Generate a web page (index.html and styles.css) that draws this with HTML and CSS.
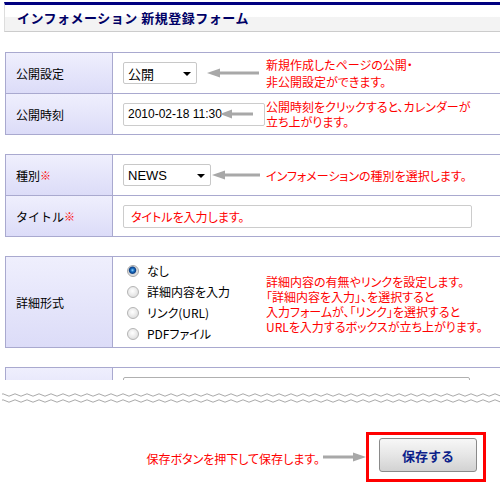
FILE: index.html
```html
<!DOCTYPE html>
<html lang="ja">
<head>
<meta charset="utf-8">
<title>インフォメーション 新規登録フォーム</title>
<link rel="stylesheet" href="styles.css">
</head>
<body>
<div class="page">
  <div class="title">インフォメーション 新規登録フォーム</div>

  <div class="form-clip">
    <div class="tbl">
      <div class="row">
        <div class="label">公開設定</div>
        <div class="value">
          <div class="ctrl">
            <div class="select sel-pub">公開<span class="caret"></span></div>
            <svg class="arrow" width="52" height="10" viewBox="0 0 52 10"><path d="M0 5 L13 0.5 L13 9.5 Z"/><rect x="12" y="3.5" width="40" height="3"/></svg>
          </div>
          <p class="note note-loose">新規作成したページの公開・<br>非公開設定ができます。</p>
        </div>
      </div>
      <div class="row">
        <div class="label">公開時刻</div>
        <div class="value">
          <div class="ctrl">
            <div class="input input-date">2010-02-18 11:30</div>
            <svg class="arrow arrow-over" width="33" height="10" viewBox="0 0 33 10"><path d="M0 5 L12 0.5 L12 9.5 Z"/><rect x="11" y="3.5" width="22" height="3"/></svg>
          </div>
          <p class="note">公開時刻をクリックすると、カレンダーが<br>立ち上がります。</p>
        </div>
      </div>
    </div>

    <div class="tbl">
      <div class="row">
        <div class="label">種別<span class="req">※</span></div>
        <div class="value">
          <div class="ctrl">
            <div class="select sel-news">NEWS<span class="caret"></span></div>
            <svg class="arrow arrow-news" width="48" height="10" viewBox="0 0 48 10"><path d="M0 5 L13 0.5 L13 9.5 Z"/><rect x="12" y="3.5" width="36" height="3"/></svg>
          </div>
          <p class="note">インフォメーションの種別を選択します。</p>
        </div>
      </div>
      <div class="row">
        <div class="label">タイトル<span class="req">※</span></div>
        <div class="value">
          <div class="input input-title">タイトルを入力します。</div>
        </div>
      </div>
    </div>

    <div class="tbl">
      <div class="row row-tall">
        <div class="label">詳細形式</div>
        <div class="value">
          <div class="radios">
            <div class="radio-item"><span class="radio on"></span>なし</div>
            <div class="radio-item"><span class="radio"></span>詳細内容を入力</div>
            <div class="radio-item"><span class="radio"></span>リンク(URL)</div>
            <div class="radio-item"><span class="radio"></span>PDFファイル</div>
          </div>
          <p class="note note-detail">詳細内容の有無やリンクを設定します。<br>「詳細内容を入力」、を選択すると<br>入力フォームが、「リンク」を選択すると<br>URLを入力するボックスが立ち上がります。</p>
        </div>
      </div>
    </div>

    <div class="tbl">
      <div class="row row-cut">
        <div class="label"></div>
        <div class="value value-top">
          <div class="input input-cut"></div>
        </div>
      </div>
    </div>
  </div>

  <svg class="waves" width="500" height="14" viewBox="0 0 500 14">
    <defs>
      <pattern id="wave" x="0" y="0" width="12" height="14" patternUnits="userSpaceOnUse">
        <path d="M0 5 Q3 2.6 6 5 T12 5" fill="none" stroke="#a8a8a8" stroke-width="1"/>
        <path d="M0 11 Q3 8.6 6 11 T12 11" fill="none" stroke="#a8a8a8" stroke-width="1"/>
      </pattern>
    </defs>
    <rect x="2" y="0" width="498" height="14" fill="url(#wave)"/>
  </svg>

  <div class="bottom">
    <p class="note note-save">保存ボタンを押下して保存します。</p>
    <svg class="arrow-right" width="43" height="10" viewBox="0 0 43 10"><rect x="0" y="3.5" width="31" height="3"/><path d="M43 5 L30 0.5 L30 9.5 Z"/></svg>
    <div class="save-box">
      <div class="save-btn">保存する</div>
    </div>
  </div>
</div>
</body>
</html>
```

FILE: styles.css
```css
* { box-sizing: border-box; }
html, body { margin: 0; padding: 0; background: #fff; }
body {
  width: 500px;
  height: 492px;
  overflow: hidden;
  font-family: "Noto Sans CJK JP", "Liberation Sans", sans-serif;
  font-size: 12px;
  color: #000;
}
.page { padding: 2px 0 0 4px; }

.title {
  height: 30px;
  border-top: 3px solid #000080;
  border-left: 1px solid #dddddd;
  border-bottom: 1px solid #cccccc;
  background: linear-gradient(#ffffff 0, #ffffff 44%, #f3f3f3 48%, #f3f3f3 100%);
  padding-left: 12px;
  font-size: 13px;
  font-weight: bold;
  line-height: 26px;
  color: #000066;
  letter-spacing: 0.5px;
}

.form-clip {
  margin-top: 20px;
  margin-left: 1px;
  width: 510px;
  height: 328px;
  overflow: hidden;
  display: flex;
  flex-direction: column;
  gap: 19px;
}
.tbl { border: 1px solid #a9a9cf; flex: none; }
.row { display: flex; height: 40px; }
.row + .row { height: 41px; border-top: 1px solid #a9a9cf; }
.row-tall { height: 90px; }
.row-cut { height: 40px; }

.label {
  width: 107px;
  flex: none;
  border-right: 1px solid #a9a9cf;
  background: linear-gradient(#efeffd, #dcdcf8);
  padding-left: 10px;
  display: flex;
  align-items: center;
}
.req { color: #ff0000; font-size: 11px; }

.value {
  flex: 1;
  display: flex;
  align-items: center;
  padding-left: 10px;
}
.value-top { align-items: flex-start; padding-top: 9px; }

.ctrl {
  width: 143px;
  flex: none;
  display: flex;
  align-items: center;
  position: relative;
}
.arrow { margin-left: auto; margin-right: 7px; fill: #a8a8a8; }
.arrow-news { margin-right: 6px; }
.arrow-over { position: absolute; right: 6px; top: 50%; margin-top: -5px; }

.select {
  position: relative;
  height: 22px;
  border: 1px solid #c8c8c8;
  border-radius: 2px;
  background: #fff;
  padding-left: 4px;
  display: flex;
  align-items: center;
  font-size: 13px;
}
.sel-pub { width: 74px; }
.sel-news { width: 88px; font-family: "Liberation Sans", sans-serif; }
.caret {
  position: absolute;
  right: 5px;
  top: 9px;
  width: 0;
  height: 0;
  border-left: 4px solid transparent;
  border-right: 4px solid transparent;
  border-top: 4px solid #000;
}

.input {
  height: 23px;
  border: 1px solid #cccccc;
  border-radius: 2px;
  background: #fff;
  padding-left: 4px;
  display: flex;
  align-items: center;
}
.input-date { width: 142px; font-family: "Liberation Sans", sans-serif; font-size: 12px; }
.input-title { width: 349px; color: #ff0000; padding-left: 7px; font-feature-settings: "palt"; }
.input-cut { width: 347px; border-color: #b0b0b0; }

.note {
  margin: 0;
  color: #ff0000;
  line-height: 15px;
  font-feature-settings: "palt";
}
.note-loose { line-height: 17px; }
.note-detail { line-height: 15px; margin-top: 4px; }

.radios { width: 143px; flex: none; display: flex; flex-direction: column; }
.radio-item { height: 21px; display: flex; align-items: center; font-feature-settings: "palt"; }
.radio {
  width: 12px;
  height: 12px;
  margin-left: 4px;
  margin-right: 8px;
  border-radius: 50%;
  border: 1px solid #b4b4b4;
  background: radial-gradient(circle at 45% 40%, #ffffff 0, #e6e6e6 60%, #d4d4d4 100%);
}
.radio.on {
  border-color: #a8a8a8;
  background: radial-gradient(circle at 45% 42%, #9ad6ff 0, #1d74c6 1.6px, #0a3f86 3.2px, #d8d8d8 4.2px, #f2f2f2 100%);
}

.waves { display: block; margin: 10px 0 0 -4px; }

.bottom {
  margin-top: 28px;
  padding-right: 14px;
  display: flex;
  justify-content: flex-end;
  align-items: center;
}
.note-save { margin-top: 2px; }
.arrow-right { fill: #a8a8a8; margin-left: 3px; flex: none; }
.save-box {
  width: 120px;
  height: 50px;
  border: 3px solid #ff0000;
  padding: 3px 6px 7px 10px;
  flex: none;
}
.save-btn {
  width: 98px;
  height: 34px;
  border: 1px solid #8a8a8a;
  border-radius: 3px;
  background: linear-gradient(#f7f7f7, #e6e6e6 50%, #d2d2d2);
  display: flex;
  align-items: center;
  justify-content: center;
  font-size: 13px;
  font-weight: bold;
  color: #0d1f8a;
}
```
